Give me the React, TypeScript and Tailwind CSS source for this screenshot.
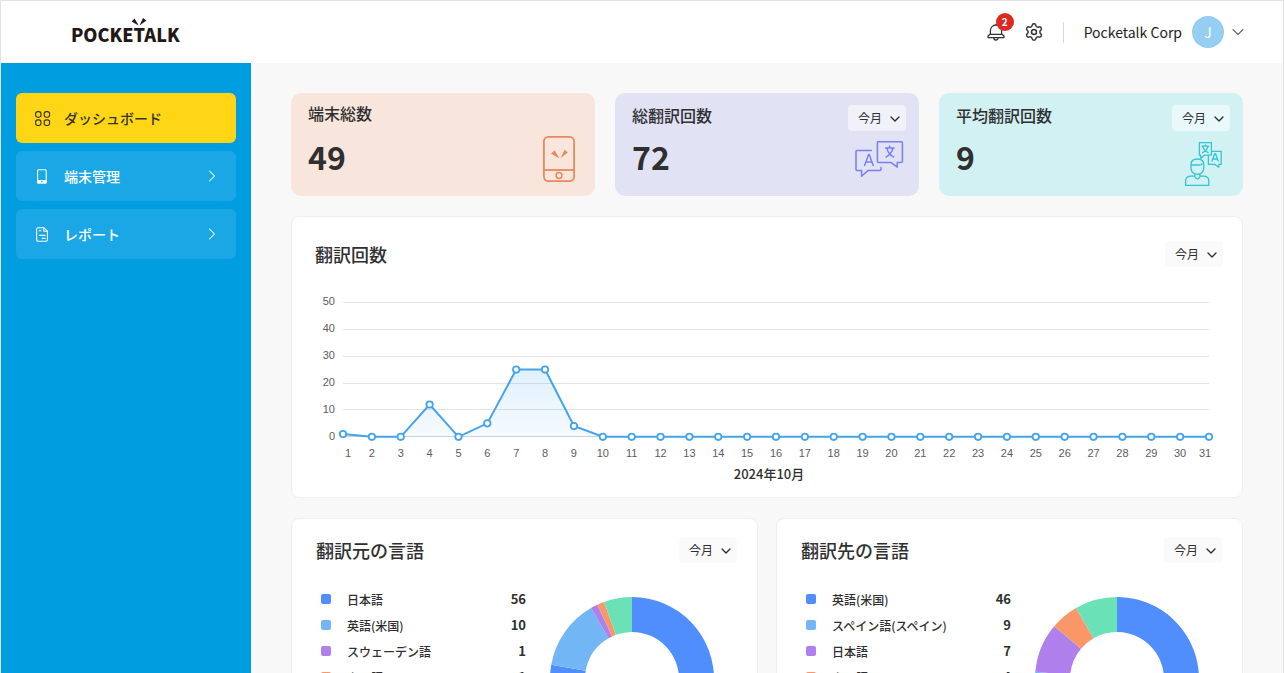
import { useState, type ReactNode } from "react";
import { ChevronDown, ChevronRight, Settings } from "lucide-react";
import clsx from "clsx";

type Slice = { label: string; value: number; color: string };

const COLORS = ["#4f8efc", "#72b6f6", "#af7fec", "#fa9768", "#6be1b7"];

const DAILY_COUNTS = [1, 0, 0, 12, 0, 5, 25, 25, 4, ...Array(22).fill(0)] as number[];

const SOURCE_LANGUAGES: Slice[] = [
  { label: "日本語", value: 56, color: COLORS[0] },
  { label: "英語(米国)", value: 10, color: COLORS[1] },
  { label: "スウェーデン語", value: 1, color: COLORS[2] },
  { label: "タイ語", value: 1, color: COLORS[3] },
  { label: "その他", value: 4, color: COLORS[4] },
];

const TARGET_LANGUAGES: Slice[] = [
  { label: "英語(米国)", value: 46, color: COLORS[0] },
  { label: "スペイン語(スペイン)", value: 9, color: COLORS[1] },
  { label: "日本語", value: 7, color: COLORS[2] },
  { label: "タイ語", value: 4, color: COLORS[3] },
  { label: "その他", value: 6, color: COLORS[4] },
];

export default function App() {
  return (
    <div className="flex h-screen flex-col overflow-hidden border-x border-t border-[#e2e2e2] bg-[#f8f8f8] font-['Noto_Sans_CJK_JP',sans-serif] text-[#2f2f2f]">
      <Header />
      <div className="flex min-h-0 flex-1">
        <Sidebar />
        <main className="min-w-0 flex-1 overflow-y-auto px-10 py-[30px] [scrollbar-width:none]">
          <div className="flex flex-col gap-5">
            <div className="grid grid-cols-3 gap-5">
              <StatCard title="端末総数" value={49} className="bg-[#f8e6dc]" icon={<DeviceArt />} />
              <StatCard title="総翻訳回数" value={72} className="bg-[#e2e2f5]" icon={<TranslateArt />} filter />
              <StatCard title="平均翻訳回数" value={9} className="bg-[#d2f1f3]" icon={<UserArt />} filter />
            </div>
            <section className="rounded-lg border border-[#eeeeee] bg-white pt-6 pr-[19px] pb-2 pl-[23px]">
              <PanelHeader title="翻訳回数" />
              <LineChart values={DAILY_COUNTS} />
            </section>
            <div className="grid grid-cols-2 gap-[18px]">
              <LanguagePanel title="翻訳元の言語" slices={SOURCE_LANGUAGES} />
              <LanguagePanel title="翻訳先の言語" slices={TARGET_LANGUAGES} />
            </div>
          </div>
        </main>
      </div>
    </div>
  );
}

function Header() {
  return (
    <header className="flex h-[62px] shrink-0 items-center justify-between bg-white pr-[35px] pl-[70px]">
      <a
        href="#"
        aria-label="POCKETALK"
        className="relative pt-1 text-[18px] leading-6 font-black text-[#231815]"
      >
        POCKETALK
        <svg viewBox="0 0 16 8" className="absolute top-0 left-[60px] h-2 w-4" fill="currentColor" aria-hidden="true">
          <path d="M.6 3.4 3.6.4 7.6 7.6ZM12 0l3.4 2.4L8.6 7.6Z" />
        </svg>
      </a>
      <div className="flex items-center">
        <button type="button" aria-label="お知らせ 2件" className="relative">
          <BellIcon />
          <span className="absolute -top-[10px] left-[9px] flex size-[18px] items-center justify-center rounded-full bg-[#dc2a20] text-[10px] leading-none font-bold text-white">
            2
          </span>
        </button>
        <button type="button" aria-label="設定" className="ml-[19px]">
          <Settings size={20} strokeWidth={1.75} className="text-[#333333]" />
        </button>
        <span className="ml-[19px] h-[21px] w-px bg-[#d8d8d8]" />
        <span className="ml-5 text-sm text-[#222222]">Pocketalk Corp</span>
        <span className="ml-[10px] flex size-8 items-center justify-center rounded-full bg-[#95cef0] text-sm text-white">
          J
        </span>
        <button type="button" aria-label="アカウントメニュー" className="ml-1">
          <ChevronDown size={20} strokeWidth={1.25} className="text-[#333333]" />
        </button>
      </div>
    </header>
  );
}

function Sidebar() {
  return (
    <nav className="flex w-[250px] shrink-0 flex-col gap-2 bg-[#009de1] px-[15px] py-[30px]">
      <NavItem label="ダッシュボード" icon={<GridIcon />} active />
      <NavItem label="端末管理" icon={<PhoneIcon />} />
      <NavItem label="レポート" icon={<ReportIcon />} />
    </nav>
  );
}

function NavItem({ label, icon, active }: { label: string; icon: ReactNode; active?: boolean }) {
  return (
    <a
      href="#"
      aria-current={active ? "page" : undefined}
      className={clsx(
        "flex h-[50px] items-center rounded-md pr-[14px] pl-[18px] text-sm font-medium",
        active ? "bg-[#ffd616] text-[#333333]" : "bg-[#1ba7e5] text-white",
      )}
    >
      {icon}
      <span className="ml-[13px] flex-1">{label}</span>
      {!active && <ChevronRight size={20} strokeWidth={1.25} />}
    </a>
  );
}

function PeriodSelect({ label, className }: { label: string; className: string }) {
  const [period, setPeriod] = useState("今月");
  return (
    <div className="relative h-[26px] w-[58px] shrink-0">
      <select
        aria-label={`${label}の期間`}
        value={period}
        onChange={(e) => setPeriod(e.target.value)}
        className={clsx("block h-full w-full appearance-none rounded pb-px pl-[10px] text-xs text-[#2f2f2f]", className)}
      >
        <option>今月</option>
        <option>先月</option>
      </select>
      <ChevronDown size={16} strokeWidth={2} className="pointer-events-none absolute top-[6px] right-[3px]" />
    </div>
  );
}

type StatCardProps = {
  title: string;
  value: number;
  className: string;
  icon: ReactNode;
  filter?: boolean;
};

function StatCard({ title, value, className, icon, filter }: StatCardProps) {
  return (
    <section className={clsx("rounded-[10px] pt-3 pr-[13px] pb-2 pl-[17px]", className)}>
      <div className="flex min-h-[26px] items-start justify-between">
        <h2 className={clsx("text-base font-medium", filter ? "leading-[20px]" : "leading-[16px]")}>{title}</h2>
        {filter && <PeriodSelect label={title} className="bg-white/50" />}
      </div>
      <div className="mt-[5px] flex items-start justify-between">
        <p className="text-[32px] leading-[40px] font-bold">{value}</p>
        {icon}
      </div>
    </section>
  );
}

function PanelHeader({ title }: { title: string }) {
  return (
    <div className="flex items-center justify-between">
      <h2 className="text-lg leading-[26px] font-medium">{title}</h2>
      <PeriodSelect label={title} className="bg-[#fafafa]" />
    </div>
  );
}

function LineChart({ values }: { values: number[] }) {
  const left = 28;
  const right = 894;
  const base = 145.8;
  const top = 11.3;
  const x = (i: number) => left + (i * (right - left)) / (values.length - 1);
  const y = (v: number) => base - (v * (base - top)) / 50;
  const line = values.map((v, i) => `${x(i)},${y(v)}`).join(" ");

  // The first and last labels are pulled inside the plot area
  const labelX = (i: number) => {
    if (i === 0) return x(i) + 5;
    if (i === values.length - 1) return x(i) - 4;
    return x(i);
  };

  return (
    <svg viewBox="0 0 908 198" className="mt-6 block w-full" role="img" aria-label="2024年10月の翻訳回数">
      <defs>
        <linearGradient id="area" x1="0" y1="0" x2="0" y2="1">
          <stop offset="0" stopColor="#45a8f5" stopOpacity="0.17" />
          <stop offset="1" stopColor="#45a8f5" stopOpacity="0.05" />
        </linearGradient>
      </defs>
      <g className="font-['Liberation_Sans',sans-serif] text-[11px]" fill="#5c5c5c">
        {[50, 40, 30, 20, 10, 0].map((tick) => (
          <g key={tick}>
            <path
              d={`M${left} ${Math.floor(y(tick)) + 0.5}H${right}`}
              stroke={tick === 0 ? "#cfd3d8" : "#e3e3e3"}
            />
            <text x={20} y={y(tick) + 3} textAnchor="end">
              {tick}
            </text>
          </g>
        ))}
        {values.map((_, i) => (
          <text key={i} x={labelX(i)} y={166} textAnchor="middle">
            {i + 1}
          </text>
        ))}
      </g>
      <polygon points={`${left},${base} ${line} ${right},${base}`} fill="url(#area)" />
      <polyline points={line} fill="none" stroke="#45a3e9" strokeWidth="2" />
      {values.map((v, i) => (
        <circle key={i} cx={x(i)} cy={y(v)} r="3.2" fill="#ffffff" stroke="#45a3e9" strokeWidth="1.8" />
      ))}
      <text x={454} y={188} textAnchor="middle" className="text-[13px] font-medium" fill="#2f2f2f">
        2024年10月
      </text>
    </svg>
  );
}

function LanguagePanel({ title, slices }: { title: string; slices: Slice[] }) {
  return (
    <section className="rounded-lg border border-[#eeeeee] bg-white pt-[18px] pr-5 pb-6 pl-6">
      <PanelHeader title={title} />
      <div className="mt-[23px] flex gap-6">
        <ul className="min-w-0 flex-1 pl-[5px]">
          {slices.map((slice) => (
            <li key={slice.label} className="flex h-[26px] items-center">
              <span className="size-[10px] rounded-xs" style={{ backgroundColor: slice.color }} />
              <span className="ml-4 flex-1 pt-[2px] text-xs font-medium">{slice.label}</span>
              <span className="text-[13px] font-bold">{slice.value}</span>
            </li>
          ))}
        </ul>
        <Donut slices={slices} />
      </div>
    </section>
  );
}

function Donut({ slices }: { slices: Slice[] }) {
  const total = slices.reduce((sum, s) => sum + s.value, 0);
  let start = 0;
  return (
    <svg viewBox="0 0 164 164" className="mt-[11px] mr-[23px] size-[164px] shrink-0" aria-hidden="true">
      {slices.map((slice) => {
        const from = start;
        start += slice.value / total;
        return <path key={slice.label} d={ringPath(from, start)} fill={slice.color} />;
      })}
    </svg>
  );
}

// Ring segment between two fractions of a full turn, clockwise from the top
function ringPath(from: number, to: number): string {
  const point = (t: number, r: number) => {
    const a = t * 2 * Math.PI;
    return `${82 + r * Math.sin(a)} ${82 - r * Math.cos(a)}`;
  };
  const large = to - from > 0.5 ? 1 : 0;
  return `M${point(from, 82)}A82 82 0 ${large} 1 ${point(to, 82)}L${point(to, 47)}A47 47 0 ${large} 0 ${point(from, 47)}Z`;
}

function BellIcon() {
  return (
    <svg viewBox="0 0 18 18" className="size-[18px] text-[#333333]" fill="none" stroke="currentColor" strokeWidth="1.3" aria-hidden="true">
      <path d="M3.4 11V7.6a5.6 5.6 0 0 1 11.2 0V11l2.4 2v1.6H1V13ZM3.2 11.4h11.6M9 2V.8" strokeLinejoin="round" />
      <path d="M6.8 14.8a2.2 2.2 0 0 0 4.4 0" />
    </svg>
  );
}

function GridIcon() {
  return (
    <svg viewBox="0 0 17 17" className="size-[17px]" fill="none" stroke="currentColor" strokeWidth="1.1" aria-hidden="true">
      <rect x="1.6" y="1.6" width="5.4" height="5.6" rx="2.2" />
      <rect x="10.2" y="1.6" width="5.4" height="5.6" rx="2.2" />
      <rect x="1.6" y="9.9" width="5.4" height="5.6" rx="2.2" />
      <rect x="10.2" y="9.9" width="5.4" height="5.6" rx="2.2" />
    </svg>
  );
}

function PhoneIcon() {
  return (
    <svg viewBox="0 0 17 17" className="size-[17px]" aria-hidden="true">
      <rect x="3.6" y="1.7" width="8.6" height="13.2" rx="1" fill="none" stroke="currentColor" strokeWidth="1.1" />
      <path d="M3.2 12h9.4v3.4H3.2Z" fill="currentColor" />
      <circle cx="7.9" cy="13.6" r="0.8" fill="#1ba7e5" />
    </svg>
  );
}

function ReportIcon() {
  return (
    <svg viewBox="0 0 17 17" className="size-[17px]" fill="none" stroke="currentColor" strokeWidth="1.1" strokeLinejoin="round" aria-hidden="true">
      <path d="M2.6 3.2a1.4 1.4 0 0 1 1.4-1.4h6l3.4 3.4v8.6a1.4 1.4 0 0 1-1.4 1.4H4a1.4 1.4 0 0 1-1.4-1.4Z" />
      <path d="M9.8 1.8v3.4h3.6M4.8 4.7h2.6M4.8 9.4h6.6M7.8 12.4h3.8" />
    </svg>
  );
}

function DeviceArt() {
  return (
    <svg viewBox="0 0 52 52" className="size-[52px]" fill="none" stroke="#e68a5f" strokeWidth="1.8" aria-hidden="true">
      <rect x="13.9" y="0.9" width="30.2" height="44.2" rx="4.5" />
      <path d="M14 34h30" />
      <circle cx="29" cy="39.5" r="2.9" strokeWidth="1.5" />
      <path d="M21 17.8 24.6 14.2 29.4 22.4ZM34.6 13.8 37.8 16.6 30.6 22Z" fill="#e68a5f" stroke="none" />
    </svg>
  );
}

function TranslateArt() {
  return (
    <svg viewBox="0 0 52 52" className="size-[52px]" fill="none" stroke="#7b7ff0" strokeWidth="1.5" strokeLinejoin="round" aria-hidden="true">
      <path d="M23.4 5.8h24q1 0 1 1v18.8q0 1-1 1h-4.2v4.6l-6-4.6H24.4q-1 0-1-1V6.8q0-1 1-1Z" />
      <path d="M17.4 14.4H3q-1 0-1 1v18.2q0 1 1 1h4.6v5.6l6.2-5.6H26q1 0 1-1v-2" strokeLinecap="round" />
      <path d="m10.4 30 4.2-11.6h.6L19.4 30M11.8 26h6.2" />
      <path d="M31 12h9.6M35.6 9.4V12M39 12.2c-1 4-3.4 7-7.4 9.2M32.8 12.2c1 4 3.4 7 7.4 9.2" />
    </svg>
  );
}

function UserArt() {
  return (
    <svg viewBox="0 0 52 52" className="size-[52px]" fill="none" stroke="#36c3d4" strokeWidth="1.3" strokeLinejoin="round" aria-hidden="true">
      <path d="M21.4 6.6h12v12.6h-7l-3.6 3.2v-3.2h-1.4Z" />
      <path d="M34 15.4h9.2v13h-2.4v2.8l-3.8-2.8h-6.6v-8.8" />
      <path d="M23.6 10.2h7.6M27.4 8.4v1.8M30 10.4q-1 4.2-5.8 6.4M24.8 10.4q1 4.2 5.8 6.4" />
      <path d="m33.8 25.6 3-8h.6l3 8M34.8 23h4.6" />
      <path d="M13 28.4q0-5.4 6.4-5.4t6.4 5.4v3q0 6.4-6.4 6.8-6.4-.4-6.4-6.8ZM13 29h8.6q2.4 0 2.6-1.8M16.8 37.6v3q2.6 4.4 5.2 0v-3" />
      <path d="M16.8 40.2h-4.6q-4.6.4-4.6 5v4.2h23.2v-4.2q0-4.6-4.6-5H22" />
    </svg>
  );
}
